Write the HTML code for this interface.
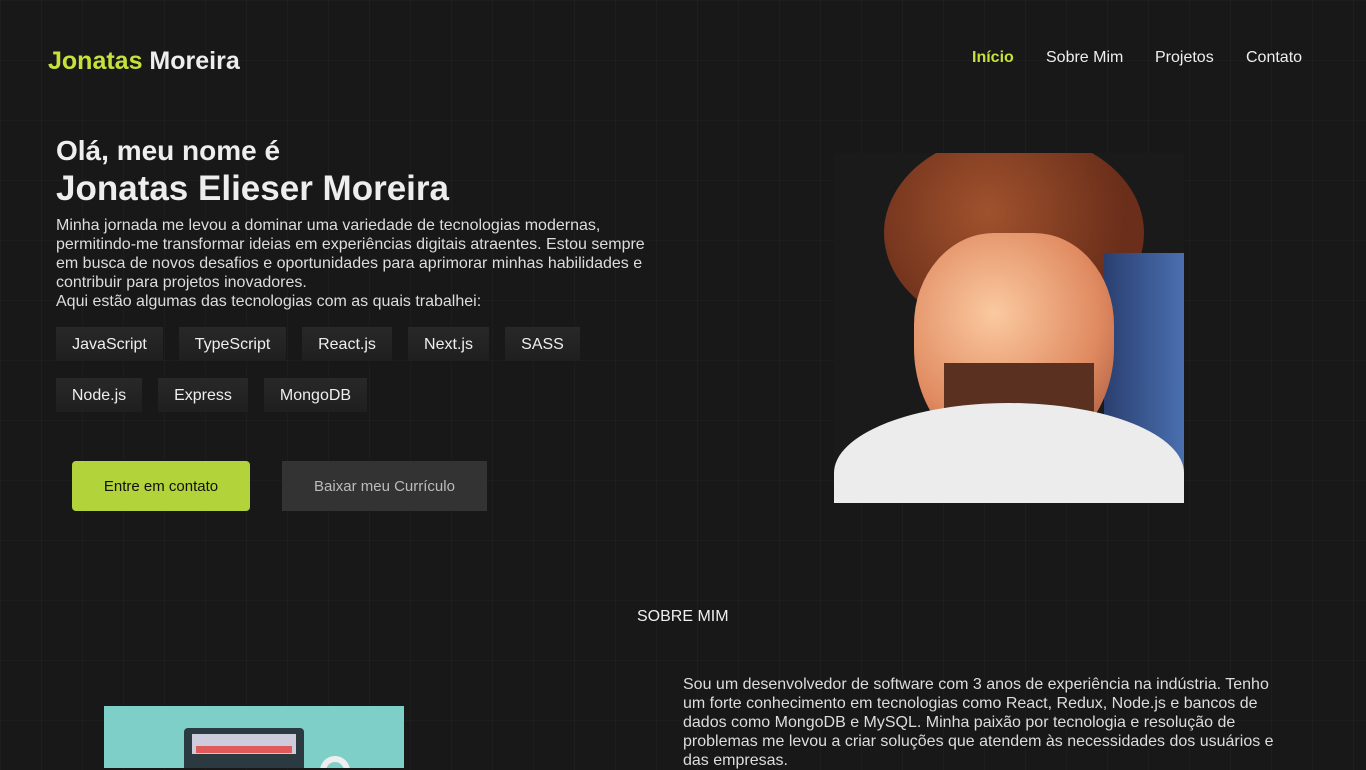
<!DOCTYPE html>
<html><head><meta charset="utf-8"><style>
*{margin:0;padding:0;box-sizing:border-box}
body{width:1366px;height:768px;overflow:hidden;background:#181818;font-family:"Liberation Sans",sans-serif;color:#eee;position:relative;
background-image:linear-gradient(90deg,rgba(255,255,255,.025) 1px,transparent 1px),linear-gradient(rgba(255,255,255,.025) 1px,transparent 1px);background-size:41px 60px;}
.abs{position:absolute}
.logo{left:48px;top:47px;font-size:25px;font-weight:bold}
.logo span{color:#c6e23a}
nav a{position:absolute;top:49px;font-size:16px;color:#eee;text-decoration:none}
.p{left:56px;top:216px;width:600px;font-size:16px;line-height:19px;color:#ddd}
.tag{position:absolute;height:34px;background:linear-gradient(#282828,#1f1f1f);font-size:16px;line-height:36px;text-align:center;color:#eee}
.btn{position:absolute;top:461px;height:50px;font-size:15px;line-height:52px;text-align:center}
</style></head><body>
<div class="abs logo"><span>Jonatas</span> Moreira</div>
<nav><a style="left:972px;color:#c6e23a;font-weight:bold">Início</a><a style="left:1046px">Sobre Mim</a><a style="left:1155px">Projetos</a><a style="left:1246px">Contato</a></nav>
<div class="abs" style="left:56px;top:135px;font-size:28px;font-weight:bold">Olá, meu nome é</div>
<div class="abs" style="left:56px;top:169px;font-size:35px;font-weight:bold">Jonatas Elieser Moreira</div>
<div class="abs p">Minha jornada me levou a dominar uma variedade de tecnologias modernas, permitindo-me transformar ideias em experiências digitais atraentes. Estou sempre em busca de novos desafios e oportunidades para aprimorar minhas habilidades e contribuir para projetos inovadores.<br>Aqui estão algumas das tecnologias com as quais trabalhei:</div>
<div class="tag" style="left:56px;top:327px;width:107px">JavaScript</div>
<div class="tag" style="left:179px;top:327px;width:107px">TypeScript</div>
<div class="tag" style="left:302px;top:327px;width:90px">React.js</div>
<div class="tag" style="left:408px;top:327px;width:81px">Next.js</div>
<div class="tag" style="left:505px;top:327px;width:75px">SASS</div>
<div class="tag" style="left:56px;top:378px;width:86px">Node.js</div>
<div class="tag" style="left:158px;top:378px;width:90px">Express</div>
<div class="tag" style="left:264px;top:378px;width:103px">MongoDB</div>
<div class="btn" style="left:72px;width:178px;background:#b2d33a;color:#111;border-radius:4px">Entre em contato</div>
<div class="btn" style="left:282px;width:205px;background:#333;color:#bbb">Baixar meu Currículo</div>
<div class="abs" style="left:834px;top:153px;width:350px;height:350px;overflow:hidden;background:#1a1a1a;">
<div class="abs" style="left:50px;top:-20px;width:260px;height:200px;border-radius:50%;background:radial-gradient(circle at 40% 40%,#a0522d,#6a2e1a 70%)"></div>
<div class="abs" style="left:270px;top:100px;width:80px;height:260px;background:linear-gradient(90deg,#2a3f70,#4a6fb0)"></div>
<div class="abs" style="left:80px;top:80px;width:200px;height:230px;border-radius:40% 40% 50% 50%;background:radial-gradient(circle at 40% 35%,#fbc9a0,#e08a60 55%,#8a4030)"></div>
<div class="abs" style="left:110px;top:210px;width:150px;height:95px;border-radius:0 0 50% 50%;background:#5a3020"></div>
<div class="abs" style="left:0;top:250px;width:350px;height:140px;border-radius:60% 60% 0 0;background:#ececec"></div>
</div>
<div class="abs" style="left:637px;top:608px;font-size:16px">SOBRE MIM</div>
<div class="abs" style="left:683px;top:675px;width:600px;font-size:16px;line-height:19px;color:#ddd">Sou um desenvolvedor de software com 3 anos de experiência na indústria. Tenho um forte conhecimento em tecnologias como React, Redux, Node.js e bancos de dados como MongoDB e MySQL. Minha paixão por tecnologia e resolução de problemas me levou a criar soluções que atendem às necessidades dos usuários e das empresas.</div>
<div class="abs" style="left:104px;top:706px;width:300px;height:62px;background:#7ecfc8;overflow:hidden">
<div class="abs" style="left:80px;top:22px;width:120px;height:50px;background:#2b3a40;border-radius:4px"></div>
<div class="abs" style="left:88px;top:28px;width:104px;height:20px;background:#ccd"></div>
<div class="abs" style="left:92px;top:40px;width:96px;height:7px;background:#e05a5a"></div>
<div class="abs" style="left:216px;top:50px;width:30px;height:30px;border-radius:50%;border:6px solid #eee"></div>
</div>
</body></html>
